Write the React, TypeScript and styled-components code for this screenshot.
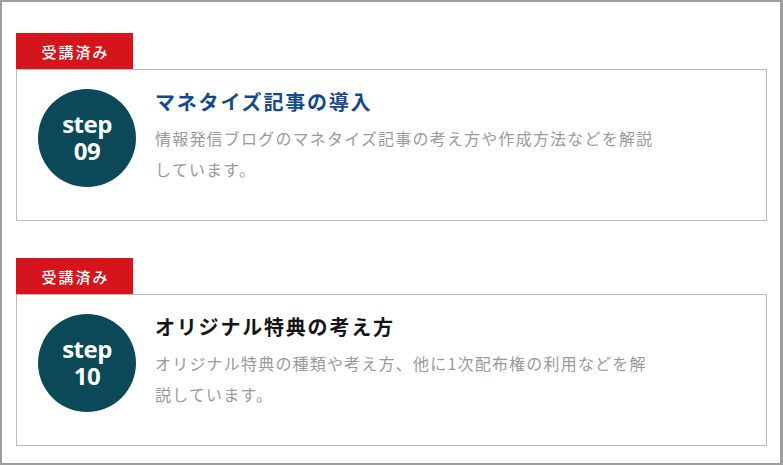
import styled, { createGlobalStyle } from "styled-components";

const GlobalStyle = createGlobalStyle`
  html, body {
    margin: 0;
    padding: 0;
    background: #fff;
  }
  * {
    box-sizing: border-box;
  }
`;

const Frame = styled.div`
  width: 783px;
  height: 465px;
  border: 2px solid #9e9e9e;
  border-right-width: 3px;
  padding: 31px 14px 0 14px;
  display: flex;
  flex-direction: column;
  gap: 37px;
  font-family: "Noto Sans CJK JP", "Noto Sans", sans-serif;
`;

const Lesson = styled.section`
  display: flex;
  flex-direction: column;
  align-items: flex-start;
`;

const Badge = styled.div`
  width: 117px;
  height: 36px;
  background: #d5141b;
  color: #fff;
  font-size: 15px;
  font-weight: 500;
  letter-spacing: 2px;
  display: flex;
  align-items: center;
  justify-content: center;
  padding-left: 2px;
`;

const Card = styled.div`
  width: 751px;
  height: 152px;
  border: 1px solid #bcbcbc;
  padding: 19px 20px 0 21px;
  display: flex;
  gap: 19px;
`;

const StepCircle = styled.div`
  flex: none;
  width: 98px;
  height: 98px;
  border-radius: 50%;
  background: #0b4858;
  color: #fff;
  font-family: "Open Sans", "Liberation Sans", sans-serif;
  font-weight: 700;
  font-size: 24px;
  line-height: 27px;
  letter-spacing: -0.5px;
  display: flex;
  flex-direction: column;
  align-items: center;
  justify-content: center;
  padding-bottom: 2px;
`;

const Body = styled.div`
  display: flex;
  flex-direction: column;
`;

const Title = styled.h2<{ $color: string }>`
  margin: 0;
  font-size: 20px;
  line-height: 26px;
  font-weight: 700;
  letter-spacing: 1.8px;
  color: ${(p) => p.$color};
`;

const Description = styled.p`
  margin: 8px 0 0;
  font-size: 16px;
  line-height: 31px;
  letter-spacing: 1.2px;
  color: #9a9a9a;
`;

const lessons = [
  {
    step: "09",
    title: "マネタイズ記事の導入",
    color: "#134a8b",
    lines: ["情報発信ブログのマネタイズ記事の考え方や作成方法などを解説", "しています。"],
  },
  {
    step: "10",
    title: "オリジナル特典の考え方",
    color: "#151515",
    lines: ["オリジナル特典の種類や考え方、他に1次配布権の利用などを解", "説しています。"],
  },
];

export default function App() {
  return (
    <>
      <GlobalStyle />
      <Frame>
        {lessons.map((l) => (
          <Lesson key={l.step}>
            <Badge>受講済み</Badge>
            <Card>
              <StepCircle>
                <span>step</span>
                <span>{l.step}</span>
              </StepCircle>
              <Body>
                <Title $color={l.color}>{l.title}</Title>
                <Description>
                  {l.lines[0]}
                  <br />
                  {l.lines[1]}
                </Description>
              </Body>
            </Card>
          </Lesson>
        ))}
      </Frame>
    </>
  );
}
